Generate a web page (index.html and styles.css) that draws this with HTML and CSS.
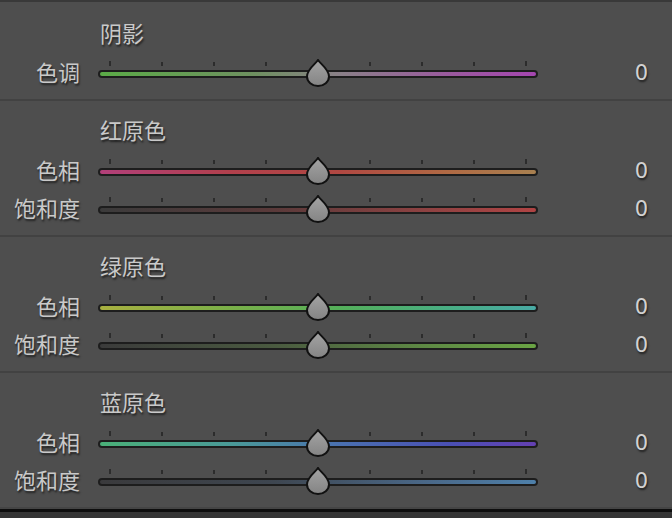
FILE: index.html
```html
<!DOCTYPE html>
<html lang="zh">
<head>
<meta charset="utf-8">
<link rel="stylesheet" href="styles.css">
</head>
<body>
<div class="panel">
  <section class="section first">
    <div class="heading">阴影</div>
    <div class="row">
      <div class="label">色调</div>
      <div class="slider">
        <div class="ticks"><i class="end"></i><i></i><i></i><i></i><i></i><i></i><i></i><i></i><i class="end"></i></div>
        <div class="track"><div class="fill g-tint"></div></div>
        <svg class="knob" viewBox="0 0 24 28" width="24" height="28"><defs><linearGradient id="k1" x1="0" y1="0" x2="0" y2="1"><stop offset="0" stop-color="#a4a4a4"/><stop offset="1" stop-color="#848484"/></linearGradient></defs><path d="M12 1 C14 4.5 23 10 23 17.5 A11 9.5 0 0 1 1 17.5 C1 10 10 4.5 12 1 Z" fill="url(#k1)" stroke="#111" stroke-width="2"/></svg>
      </div>
      <div class="value">0</div>
    </div>
  </section>
  <section class="section">
    <div class="heading">红原色</div>
    <div class="row">
      <div class="label">色相</div>
      <div class="slider">
        <div class="ticks"><i class="end"></i><i></i><i></i><i></i><i></i><i></i><i></i><i></i><i class="end"></i></div>
        <div class="track"><div class="fill g-red-hue"></div></div>
        <svg class="knob" viewBox="0 0 24 28" width="24" height="28"><path d="M12 1 C14 4.5 23 10 23 17.5 A11 9.5 0 0 1 1 17.5 C1 10 10 4.5 12 1 Z" fill="url(#k1)" stroke="#111" stroke-width="2"/></svg>
      </div>
      <div class="value">0</div>
    </div>
    <div class="row">
      <div class="label">饱和度</div>
      <div class="slider">
        <div class="ticks"><i class="end"></i><i></i><i></i><i></i><i></i><i></i><i></i><i></i><i class="end"></i></div>
        <div class="track"><div class="fill g-red-sat"></div></div>
        <svg class="knob" viewBox="0 0 24 28" width="24" height="28"><path d="M12 1 C14 4.5 23 10 23 17.5 A11 9.5 0 0 1 1 17.5 C1 10 10 4.5 12 1 Z" fill="url(#k1)" stroke="#111" stroke-width="2"/></svg>
      </div>
      <div class="value">0</div>
    </div>
  </section>
  <section class="section">
    <div class="heading">绿原色</div>
    <div class="row">
      <div class="label">色相</div>
      <div class="slider">
        <div class="ticks"><i class="end"></i><i></i><i></i><i></i><i></i><i></i><i></i><i></i><i class="end"></i></div>
        <div class="track"><div class="fill g-green-hue"></div></div>
        <svg class="knob" viewBox="0 0 24 28" width="24" height="28"><path d="M12 1 C14 4.5 23 10 23 17.5 A11 9.5 0 0 1 1 17.5 C1 10 10 4.5 12 1 Z" fill="url(#k1)" stroke="#111" stroke-width="2"/></svg>
      </div>
      <div class="value">0</div>
    </div>
    <div class="row">
      <div class="label">饱和度</div>
      <div class="slider">
        <div class="ticks"><i class="end"></i><i></i><i></i><i></i><i></i><i></i><i></i><i></i><i class="end"></i></div>
        <div class="track"><div class="fill g-green-sat"></div></div>
        <svg class="knob" viewBox="0 0 24 28" width="24" height="28"><path d="M12 1 C14 4.5 23 10 23 17.5 A11 9.5 0 0 1 1 17.5 C1 10 10 4.5 12 1 Z" fill="url(#k1)" stroke="#111" stroke-width="2"/></svg>
      </div>
      <div class="value">0</div>
    </div>
  </section>
  <section class="section last">
    <div class="heading">蓝原色</div>
    <div class="row">
      <div class="label">色相</div>
      <div class="slider">
        <div class="ticks"><i class="end"></i><i></i><i></i><i></i><i></i><i></i><i></i><i></i><i class="end"></i></div>
        <div class="track"><div class="fill g-blue-hue"></div></div>
        <svg class="knob" viewBox="0 0 24 28" width="24" height="28"><path d="M12 1 C14 4.5 23 10 23 17.5 A11 9.5 0 0 1 1 17.5 C1 10 10 4.5 12 1 Z" fill="url(#k1)" stroke="#111" stroke-width="2"/></svg>
      </div>
      <div class="value">0</div>
    </div>
    <div class="row">
      <div class="label">饱和度</div>
      <div class="slider">
        <div class="ticks"><i class="end"></i><i></i><i></i><i></i><i></i><i></i><i></i><i></i><i class="end"></i></div>
        <div class="track"><div class="fill g-blue-sat"></div></div>
        <svg class="knob" viewBox="0 0 24 28" width="24" height="28"><path d="M12 1 C14 4.5 23 10 23 17.5 A11 9.5 0 0 1 1 17.5 C1 10 10 4.5 12 1 Z" fill="url(#k1)" stroke="#111" stroke-width="2"/></svg>
      </div>
      <div class="value">0</div>
    </div>
  </section>
  <div class="footer"></div>
</div>
</body>
</html>
```

FILE: styles.css
```css
html, body {
  margin: 0;
  padding: 0;
  background: #4e4e4e;
}
body {
  width: 672px;
  height: 518px;
  overflow: hidden;
  font-family: "Noto Sans CJK SC", "Noto Sans", sans-serif;
  color: #c9c9c9;
}
.panel {
  border-top: 2px solid #393939;
}
.section {
  padding: 15px 0 7px;
  border-bottom: 2px solid #424242;
}
.section.first {
  padding-top: 17px;
  padding-bottom: 7px;
}
.section.first .heading {
  margin-bottom: 5px;
}
.section.last {
  border-bottom: none;
}
.heading {
  margin-left: 100px;
  height: 30px;
  line-height: 27px;
  font-size: 22px;
  text-shadow: 1px 2px 2px rgba(0, 0, 0, 0.6);
  margin-bottom: 6px;
}
.row {
  display: flex;
  align-items: center;
  height: 38px;
}
.label {
  width: 80px;
  text-align: right;
  font-size: 22px;
  line-height: 34px;
  padding-bottom: 4px;
  text-shadow: 1px 2px 2px rgba(0, 0, 0, 0.6);
  margin-right: 18px;
}
.slider {
  position: relative;
  width: 440px;
  height: 38px;
  display: flex;
  align-items: center;
}
.track {
  width: 440px;
  height: 8px;
  margin-top: 2px;
  box-sizing: border-box;
  padding: 2px;
  border-radius: 4px;
  background: #1d1d1d;
}
.fill {
  height: 4px;
  border-radius: 2px;
}
.ticks {
  position: absolute;
  left: 11px;
  top: 6px;
  width: 418px;
  height: 6px;
  display: flex;
  justify-content: space-between;
  align-items: flex-end;
}
.ticks i {
  display: block;
  width: 2px;
  height: 4px;
  background: #2c2c2c;
}
.ticks i.end {
  height: 5px;
}
.knob {
  position: absolute;
  left: 208px;
  top: 5px;
}
.value {
  flex: 1;
  text-align: right;
  padding-right: 24px;
  font-size: 21px;
  line-height: 38px;
  font-family: "DejaVu Sans", sans-serif;
  color: #d2d2d2;
  text-shadow: 1px 2px 2px rgba(0, 0, 0, 0.6);
}
.g-tint { background: linear-gradient(to right, #5bab47, #6e9060 35%, #8a8088 55%, #9a5a9e 80%, #a546b0); }
.g-red-hue { background: linear-gradient(to right, #b2407a, #b2404c 30%, #b04842 55%, #b06a44 80%, #a88050); }
.g-red-sat { background: linear-gradient(to right, #3b3b3b, #5a3a3a 40%, #8e4242 75%, #b04444); }
.g-green-hue { background: linear-gradient(to right, #a8b040, #7ab048 30%, #54b05a 55%, #48ae84 80%, #48aaa4); }
.g-green-sat { background: linear-gradient(to right, #3b3b3b, #4a5a40 40%, #5e8a44 75%, #6aa444); }
.g-blue-hue { background: linear-gradient(to right, #4ab078, #4a9a98 30%, #4a70b0 55%, #4a50b4 80%, #6440b2); }
.g-blue-sat { background: linear-gradient(to right, #3a3a3c, #3e4650 40%, #4a6888 75%, #4e80aa); }
.footer {
  height: 11px;
  border-top: 2px solid #454545;
  box-sizing: border-box;
  background: linear-gradient(#0e0e0e 0 3px, #353535 3px);
}
```
